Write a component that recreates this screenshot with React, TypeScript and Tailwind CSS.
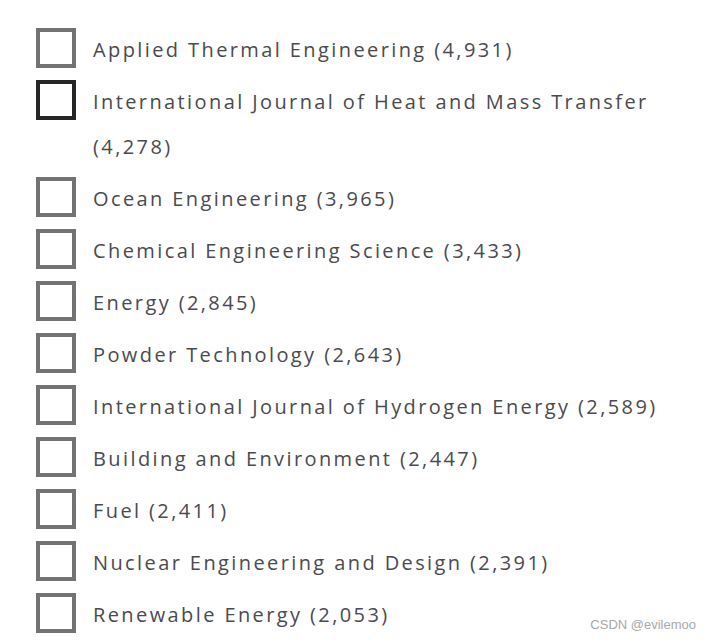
import React from "react";

const items = [
  "Applied Thermal Engineering (4,931)",
  "International Journal of Heat and Mass Transfer (4,278)",
  "Ocean Engineering (3,965)",
  "Chemical Engineering Science (3,433)",
  "Energy (2,845)",
  "Powder Technology (2,643)",
  "International Journal of Hydrogen Energy (2,589)",
  "Building and Environment (2,447)",
  "Fuel (2,411)",
  "Nuclear Engineering and Design (2,391)",
  "Renewable Energy (2,053)",
];

export default function App() {
  return (
    <div className="relative w-[710px] h-[642px] bg-white overflow-hidden">
      <ul className="flex flex-col gap-2 pl-[36px] pt-[28px] pr-[10px]">
        {items.map((t, i) => (
          <li key={i} className="flex items-start gap-[17px]">
            <span
              className={
                "shrink-0 w-[40px] h-[40px] border-[4px] bg-white " +
                (i === 1 ? "border-[#262626]" : "border-[#737373]")
              }
            />
            <span
              className="text-[#4a4a4f] text-[20px] leading-[45px] tracking-[2.4px] -mt-[1px]"
              style={{ fontFamily: '"Open Sans", sans-serif' }}
            >
              {t}
            </span>
          </li>
        ))}
      </ul>
      <div
        className="absolute right-[14px] bottom-[8px] text-[13px] text-[#a8a8a8]"
        style={{ fontFamily: '"Liberation Sans", Arial, sans-serif' }}
      >
        CSDN @evilemoo
      </div>
    </div>
  );
}
